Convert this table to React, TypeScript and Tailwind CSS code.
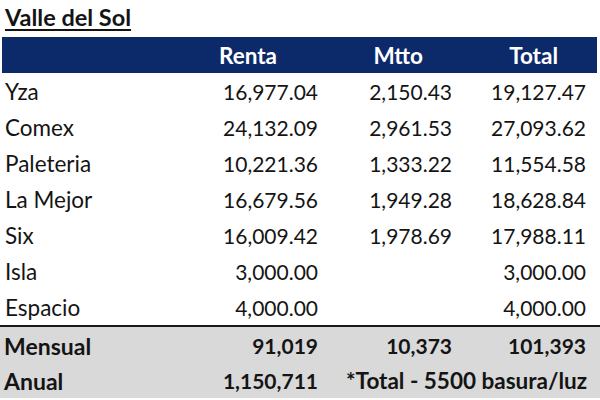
import React from "react";

const rows: [string, string, string, string][] = [
  ["Yza", "16,977.04", "2,150.43", "19,127.47"],
  ["Comex", "24,132.09", "2,961.53", "27,093.62"],
  ["Paleteria", "10,221.36", "1,333.22", "11,554.58"],
  ["La Mejor", "16,679.56", "1,949.28", "18,628.84"],
  ["Six", "16,009.42", "1,978.69", "17,988.11"],
  ["Isla", "3,000.00", "", "3,000.00"],
  ["Espacio", "4,000.00", "", "4,000.00"],
];

const grid = "grid grid-cols-[184px_138px_134px_139px]";

export default function App() {
  return (
    <div
      className="w-[600px] h-[400px] bg-white text-[#141414] overflow-hidden"
      style={{ fontFamily: "Lato, 'Liberation Sans', sans-serif" }}
    >
      <div className="h-[37px] pl-[5px] pt-[4px]">
        <span className="text-[23.5px] font-bold leading-[27px] underline decoration-[2px] underline-offset-[3px]">
          Valle del Sol
        </span>
      </div>
      <div className="ml-[2px] w-[595px] h-[36px] bg-[#0c2a6a] text-white font-bold text-[22.5px]">
        <div className={`${grid} h-full items-center pt-[1px]`}>
          <div />
          <div className="text-right pr-[47px]">Renta</div>
          <div className="text-right pr-[35px]">Mtto</div>
          <div className="text-right pr-[39px]">Total</div>
        </div>
      </div>
      <div className="pl-[2px]">
        {rows.map((r) => (
          <div key={r[0]} className={`${grid} h-[36px] items-end pb-[4px] text-[21px] leading-[26px]`}>
            <div className="pl-[3px] text-[22.5px]">{r[0]}</div>
            <div className="text-right pr-[6px]">{r[1]}</div>
            <div className="text-right pr-[6px]">{r[2]}</div>
            <div className="text-right pr-[11px]">{r[3]}</div>
          </div>
        ))}
      </div>
      <div className="border-t-2 border-[#1a1a1a] bg-[#d9d9d9] h-[73px] pl-[2px] font-bold text-[21px] leading-[26px]">
        <div className={`${grid} h-[36px] items-end pb-[4px]`}>
          <div className="pl-[2px] text-[23px]">Mensual</div>
          <div className="text-right pr-[6px]">91,019</div>
          <div className="text-right pr-[6px]">10,373</div>
          <div className="text-right pr-[11px]">101,393</div>
        </div>
        <div className={`${grid} h-[35px] items-end pb-[4px]`}>
          <div className="pl-[2px] text-[23px]">Anual</div>
          <div className="text-right pr-[6px]">1,150,711</div>
          <div className="col-span-2 text-right pr-[10px] text-[22.5px]">*Total - 5500 basura/luz</div>
        </div>
      </div>
    </div>
  );
}
